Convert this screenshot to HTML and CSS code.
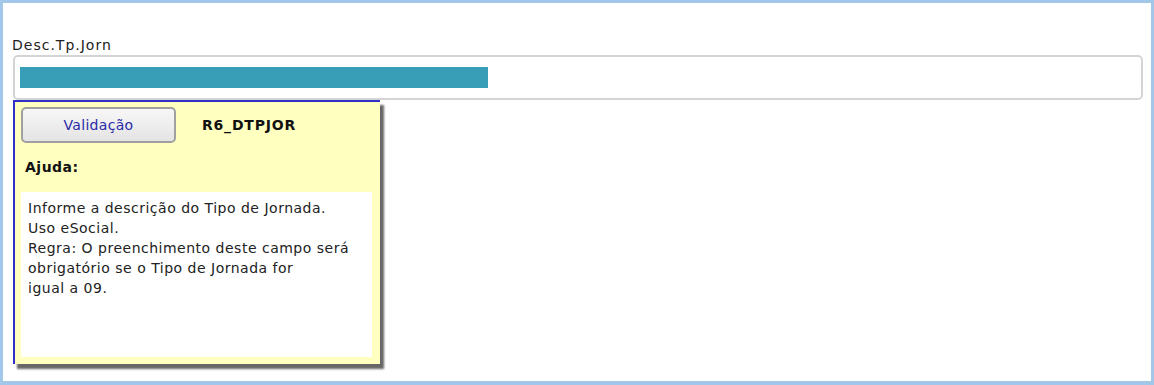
FILE: index.html
```html
<!DOCTYPE html>
<html lang="pt-BR">
<head>
    <meta charset="UTF-8">
    <meta name="viewport" content="width=device-width, initial-scale=1.0">
    <title>Desc.Tp.Jorn</title>
    <link rel="stylesheet" href="styles.css">
</head>
<body>
    <div class="frame">
        <label class="field-label" for="descTpJorn">Desc.Tp.Jorn</label>
        <div class="field">
            <div class="input" id="descTpJorn">
                <div class="selection"></div>
            </div>
            <div class="help-popup">
                <div class="help-head">
                    <button type="button" class="btn-validate">Validação</button>
                    <span class="field-code">R6_DTPJOR</span>
                </div>
                <div class="help-title">Ajuda:</div>
                <div class="help-text">
                    Informe a descrição do Tipo de Jornada.<br>
                    Uso eSocial.<br>
                    Regra: O preenchimento deste campo será<br>
                    obrigatório se o Tipo de Jornada for<br>
                    igual a 09.
                </div>
            </div>
        </div>
    </div>
</body>
</html>
```

FILE: styles.css
```css
body { margin: 0; font-family: "DejaVu Sans", Verdana, sans-serif; background: #fff; }
.frame {
    height: 385px;
    box-sizing: border-box;
    border: 3px solid #a3c7e9;
    border-bottom-width: 4px;
    padding: 33px 8px 0 10px;
}
.field-label { display: block; font-size: 14px; letter-spacing: 1px; color: #222; margin-left: -1px; height: 19px; line-height: 19px; }
.field { position: relative; }
.input {
    height: 45px;
    box-sizing: border-box;
    border: 2px solid #d4d4d4;
    border-radius: 5px;
    padding: 10px 5px;
}
.selection { width: 468px; height: 21px; background: #389db6; }
.help-popup {
    position: absolute;
    top: 100%;
    left: 0;
    width: 367px;
    height: 264px;
    box-sizing: border-box;
    background: #ffffc0;
    border-top: 2px solid #3030c8;
    border-left: 2px solid #3030c8;
    box-shadow: 4px 5px 2px rgba(0, 0, 0, 0.6);
    padding: 5px 8px 7px 6px;
    display: flex;
    flex-direction: column;
}
.help-head { display: flex; align-items: center; }
.btn-validate {
    width: 155px;
    height: 36px;
    border: 2px solid #a0a0a0;
    border-radius: 5px;
    background: linear-gradient(#f7f7f7, #e4e4e4);
    color: #2a2aa8;
    font-family: inherit;
    font-size: 14px;
    letter-spacing: 0.3px;
    padding: 0;
}
.field-code { margin-left: 26px; font-size: 14px; font-weight: bold; letter-spacing: 0.8px; color: #111; }
.help-title { font-size: 14px; font-weight: bold; letter-spacing: 0.5px; color: #111; margin: 16px 0 0 4px; height: 33px; }
.help-text {
    flex: 1;
    background: #fff;
    font-size: 14px;
    letter-spacing: 0.5px;
    line-height: 20px;
    color: #222;
    padding: 6px 7px;
}
```
